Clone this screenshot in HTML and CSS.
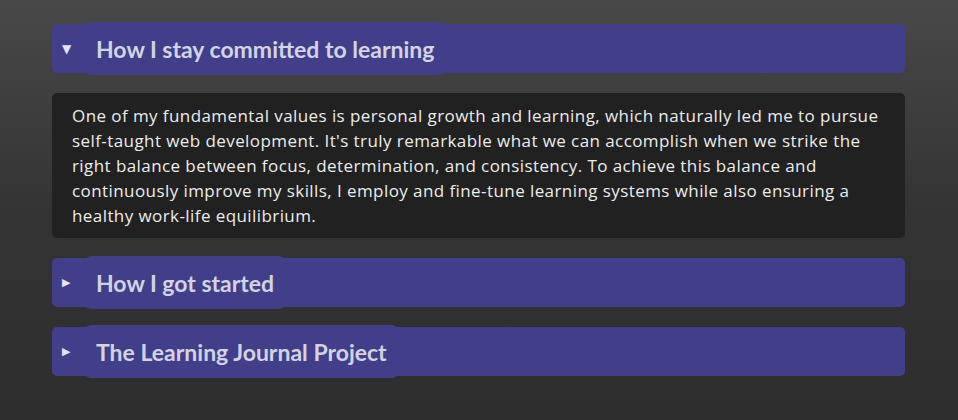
FILE: index.html
```html
<!DOCTYPE html>
<html lang="en">
<head>
<meta charset="utf-8">
<title>Learning</title>
<link rel="stylesheet" href="styles.css">
</head>
<body>
<main class="faq">
  <section class="item open">
    <div class="summary">
      <span class="marker">&#9660;</span>
      <h2 class="title">How I stay committed to learning</h2>
    </div>
    <div class="panel">
      <p>One of my fundamental values is personal growth and learning, which naturally led me to pursue self-taught web development. It's truly remarkable what we can accomplish when we strike the right balance between focus, determination, and consistency. To achieve this balance and continuously improve my skills, I employ and fine-tune learning systems while also ensuring a healthy work-life equilibrium.</p>
    </div>
  </section>
  <section class="item">
    <div class="summary">
      <span class="marker small">&#9654;</span>
      <h2 class="title">How I got started</h2>
    </div>
  </section>
  <section class="item">
    <div class="summary">
      <span class="marker small">&#9654;</span>
      <h2 class="title">The Learning Journal Project</h2>
    </div>
  </section>
</main>
</body>
</html>
```

FILE: styles.css
```css
html, body {
  margin: 0;
  height: 100%;
}
body {
  background: linear-gradient(to bottom, #484848 0px, #333333 220px, #2e2e2e 420px);
  font-family: "Lato", "Liberation Sans", sans-serif;
  color: #e6e6e6;
}
.faq {
  padding: 24px 53px 0 52px;
  display: flex;
  flex-direction: column;
  gap: 20px;
}
.item {
  display: flex;
  flex-direction: column;
  gap: 20px;
}
.summary {
  display: flex;
  align-items: center;
  height: 49px;
  background: #413f8a;
  border-radius: 5px;
}
.marker {
  width: 33px;
  padding-left: 10px;
  box-sizing: border-box;
  font-family: "DejaVu Sans", sans-serif;
  font-size: 12px;
  color: #e4e4ee;
}
.marker.small {
  font-size: 11px;
}
.title {
  margin: -2px 0;
  height: 53px;
  box-sizing: border-box;
  display: flex;
  align-items: center;
  padding: 0 11px;
  background: #413f8a;
  border-radius: 6px;
  font-size: 23px;
  font-weight: 700;
  color: #d3d3e3;
}
.panel {
  background: #212121;
  border-radius: 5px;
  padding: 10px 20px;
}
.panel p {
  margin: 0;
  font-family: "Open Sans", "Liberation Sans", sans-serif;
  font-size: 17px;
  letter-spacing: 0.42px;
  line-height: 25px;
  color: #ececec;
}
```
